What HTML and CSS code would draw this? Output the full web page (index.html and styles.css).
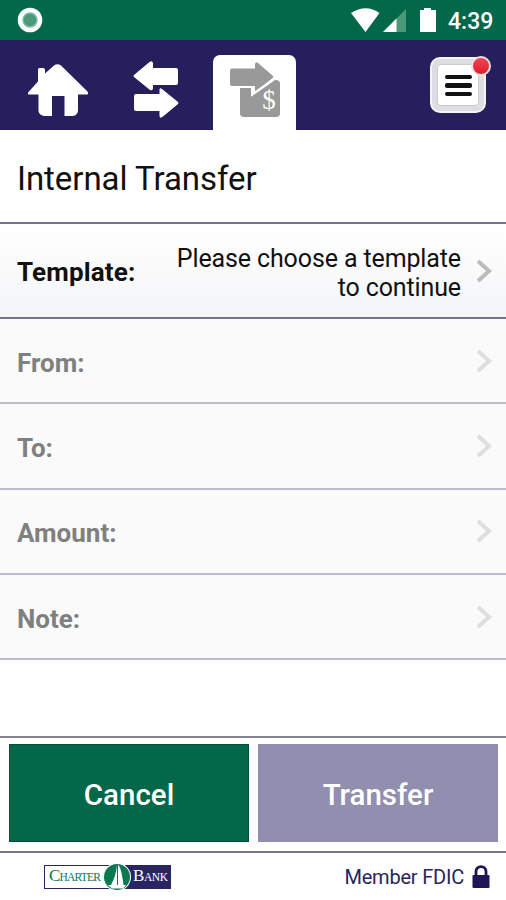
FILE: index.html
```html
<!DOCTYPE html>
<html lang="en">
<head>
<meta charset="utf-8">
<title>Internal Transfer</title>
<link rel="stylesheet" href="styles.css">
</head>
<body>
<header class="status">
  <svg class="record" width="26" height="26" viewBox="0 0 26 26"><circle cx="13" cy="13" r="12.3" fill="#fff"/><circle cx="13" cy="13" r="7.2" fill="#4b9a7b"/><circle cx="13" cy="13" r="7" fill="none" stroke="#86bba6" stroke-width="1.5"/></svg>
  <svg class="signals" width="88" height="40" viewBox="0 0 88 40">
    <path d="M0 13Q15 3.500 28.500 13L14.500 32Z" fill="#fff"/>
    <path d="M55 9V32H32Z" fill="#4b987b"/><path d="M45.500 18.500V32H32Z" fill="#fff"/>
    <path d="M73 8H80V10H85V32H69V10H73Z" fill="#fff"/>
  </svg>
  <span class="clock">4:39</span>
</header>
<nav class="nav">
  <a class="home"><svg width="62" height="54" viewBox="0 0 62 54" fill="#fff"><path d="M11 5.500Q11 4 12.500 4H16Q18 4 18 5.500V9.500L27 1.500Q30.500-1 34 1.500L60.500 27.500Q62 30.500 60 30.500H51V47Q50 52 45 52H37.500V32H25V52H17Q12 51 11.500 47V30.500H2Q0 30.500 1.500 28L11 17.500Z"/></svg></a>
  <a class="swap"><svg width="46" height="58" viewBox="0 0 46 58" fill="#fff"><path d="M1 14Q0 15 1 16L17 29Q20 30 20 27V24H43Q45 24 45 22V9Q45 7 43 7H20V2Q19-1 16.500 1Z"/><path d="M45 43Q46 42 45 41L29 28Q26.500 26 26.500 29V33H3Q1 33 1 35V48Q1 50 3 50H26.500V55Q27 58 30 55.500Z"/></svg></a>
  <a class="tab"><svg width="52" height="56" viewBox="0 0 52 56"><rect x="11" y="18" width="40" height="37" rx="4" fill="#999"/><path d="M2 8Q1 8 1 10V22Q1 24 3 24H24V31L46 15.500L26 1V8Z" fill="none" stroke="#fff" stroke-width="4"/><path d="M3 6.500H26V2Q27-1 29 1L44 14Q45 15 43 16.500L26 30V24H3Q1 24 1 22V8.500Q1 6.500 3 6.500Z" fill="#999"/><path d="M23.500 24V32L47 16" fill="none" stroke="#fff" stroke-width="2"/><text x="40" y="47" text-anchor="middle" class="dollar">$</text></svg></a>
  <a class="menu"><span class="face"><i></i><i></i><i></i></span><b class="badge"></b></a>
</nav>
<h1 class="title"><span>Internal Transfer</span></h1>
<main class="form">
  <div class="row template"><span class="label">Template:</span><span class="value">Please choose a template<br>to continue</span><svg class="chevron" width="16" height="26" viewBox="0 0 16 26"><path d="M2 3L13 13L2 23"/></svg></div>
  <div class="row off"><span class="label">From:</span><svg class="chevron" width="16" height="26" viewBox="0 0 16 26"><path d="M2 3L13 13L2 23"/></svg></div>
  <div class="row off"><span class="label">To:</span><svg class="chevron" width="16" height="26" viewBox="0 0 16 26"><path d="M2 3L13 13L2 23"/></svg></div>
  <div class="row off"><span class="label">Amount:</span><svg class="chevron" width="16" height="26" viewBox="0 0 16 26"><path d="M2 3L13 13L2 23"/></svg></div>
  <div class="row off"><span class="label">Note:</span><svg class="chevron" width="16" height="26" viewBox="0 0 16 26"><path d="M2 3L13 13L2 23"/></svg></div>
</main>
<div class="actions"><button class="cancel">Cancel</button><button class="transfer">Transfer</button></div>
<footer class="footer">
  <div class="brand">
    <span class="charter"><span class="big">C</span>HARTER</span>
    <svg width="28" height="28" viewBox="0 0 28 28"><circle cx="14" cy="14" r="14" fill="#fff"/><circle cx="14" cy="14" r="13" fill="#087951"/><path d="M14 2V22H8Q13 13 14 2ZM15 2Q18 3 20.500 22H15Z" fill="#fff"/><path d="M5 22H23L20 25.500H9Z" fill="#fff"/></svg>
    <span class="bank"><span class="big">B</span>ANK</span>
  </div>
  <span class="member">Member FDIC</span>
  <svg width="18" height="24" viewBox="0 0 18 24"><path d="M4 11V6.500C4 0 14 0 14 6.500V11" fill="none" stroke="#1d1755" stroke-width="2.800"/><rect x=".5" y="10" width="17" height="13" rx="1" fill="#1d1755"/></svg>
</footer>
</body>
</html>
```

FILE: styles.css
```css
* { box-sizing: border-box; }
body { margin: 0; width: 506px; height: 900px; overflow: hidden; background: #fff; font-family: Roboto, sans-serif; color: #111; display: flex; flex-direction: column; }
svg { display: block; flex: none; }
.status { height: 40px; flex: none; background: #026849; display: flex; align-items: center; padding: 0 13px 0 17px; }
.signals { margin-left: auto; }
.clock { color: #fff; font-size: 23px; font-weight: 500; width: 45px; margin-left: 9px; line-height: 40px; padding-top: 3px; white-space: nowrap; }
.nav { height: 90px; flex: none; background: #25205d; display: flex; align-items: flex-start; padding: 0 20px 0 27px; }
.home { margin-top: 24px; width: 106px; }
.swap { margin-top: 21px; width: 80px; }
.tab { margin-top: 15px; width: 83px; height: 75px; background: #fff; border-radius: 7px 7px 0 0; padding: 7px 0 0 16px; }
.dollar { font: 27px "Liberation Serif", serif; fill: #fff; }
.menu { position: relative; margin: 17px 0 0 auto; width: 56px; height: 56px; border-radius: 10px; background: #dedee2; border: 2px solid #f5f5f5; padding: 5px; }
.face { display: flex; flex-direction: column; align-items: center; justify-content: center; gap: 4px; width: 42px; height: 42px; padding-top: 1px; background: #fff; border: 1px solid #ccc; border-radius: 4px; }
.face i { width: 27px; height: 4.5px; border-radius: 2px; background: #111; }
.badge { position: absolute; width: 20px; height: 20px; right: -7px; top: -3px; border: 2px solid #f3dce2; border-radius: 50%; background: linear-gradient(#f04452, #dc1f31); }
.title { height: 94px; flex: none; margin: 0; padding: 5px 17px 0; border-bottom: 2px solid #77738f; display: flex; align-items: center; font-size: 33px; letter-spacing: -.05px; font-weight: 400; }
.form { height: 512px; flex: none; }
.row { height: 85.3px; padding: 0 14px 0 17px; display: flex; align-items: center; justify-content: space-between; border-bottom: 2px solid #bdb9cf; font-size: 25px; background: #fafafa; }
.row.template { height: 95px; border-color: #77738f; background: linear-gradient(#fff, #f4f5f7); }
.label { padding-top: 4px; font-size: 26px; font-weight: 700; color: #111; white-space: nowrap; }
.template .label { padding-top: 2px; letter-spacing: .15px; }
.off .label { color: #808080; }
.value { margin-left: auto; margin-right: 15px; padding-top: 4px; text-align: right; line-height: 29px; letter-spacing: -.12px; white-space: nowrap; }
.chevron path { fill: none; stroke: #bcbcbc; stroke-width: 4; }
.off .chevron path { stroke: #dedede; }
.actions { height: 117px; flex: none; border-top: 2px solid #858294; border-bottom: 2px solid #77748d; display: grid; grid-template-columns: 240px 240px; gap: 9px; padding: 6px 8px 9px 9px; }
.actions button { border: 0; color: #fff; font: 500 29.5px Roboto, sans-serif; padding: 4px 0 0; height: 98px; }
.actions .cancel { background: #026849; border: 1px solid #02503a; }
.actions .transfer { background: #928eaf; }
.footer { height: 47px; flex: none; display: flex; align-items: center; padding: 0 16px 0 44px; color: #292360; }
.brand { display: flex; align-items: center; width: 127px; height: 24px; border: 1.5px solid #292562; background: linear-gradient(90deg, #fff 73px, #292562 73px); font: 11.5px/21px "Liberation Serif", serif; white-space: nowrap; }
.charter { width: 58px; padding-left: 4px; color: #087951; letter-spacing: -.8px; }
.bank { margin-left: 2px; color: #fff; letter-spacing: -.4px; }
.big { font-size: 17px; }
.member { margin-left: auto; margin-right: 8px; font-size: 20px; letter-spacing: -.2px; }
```
